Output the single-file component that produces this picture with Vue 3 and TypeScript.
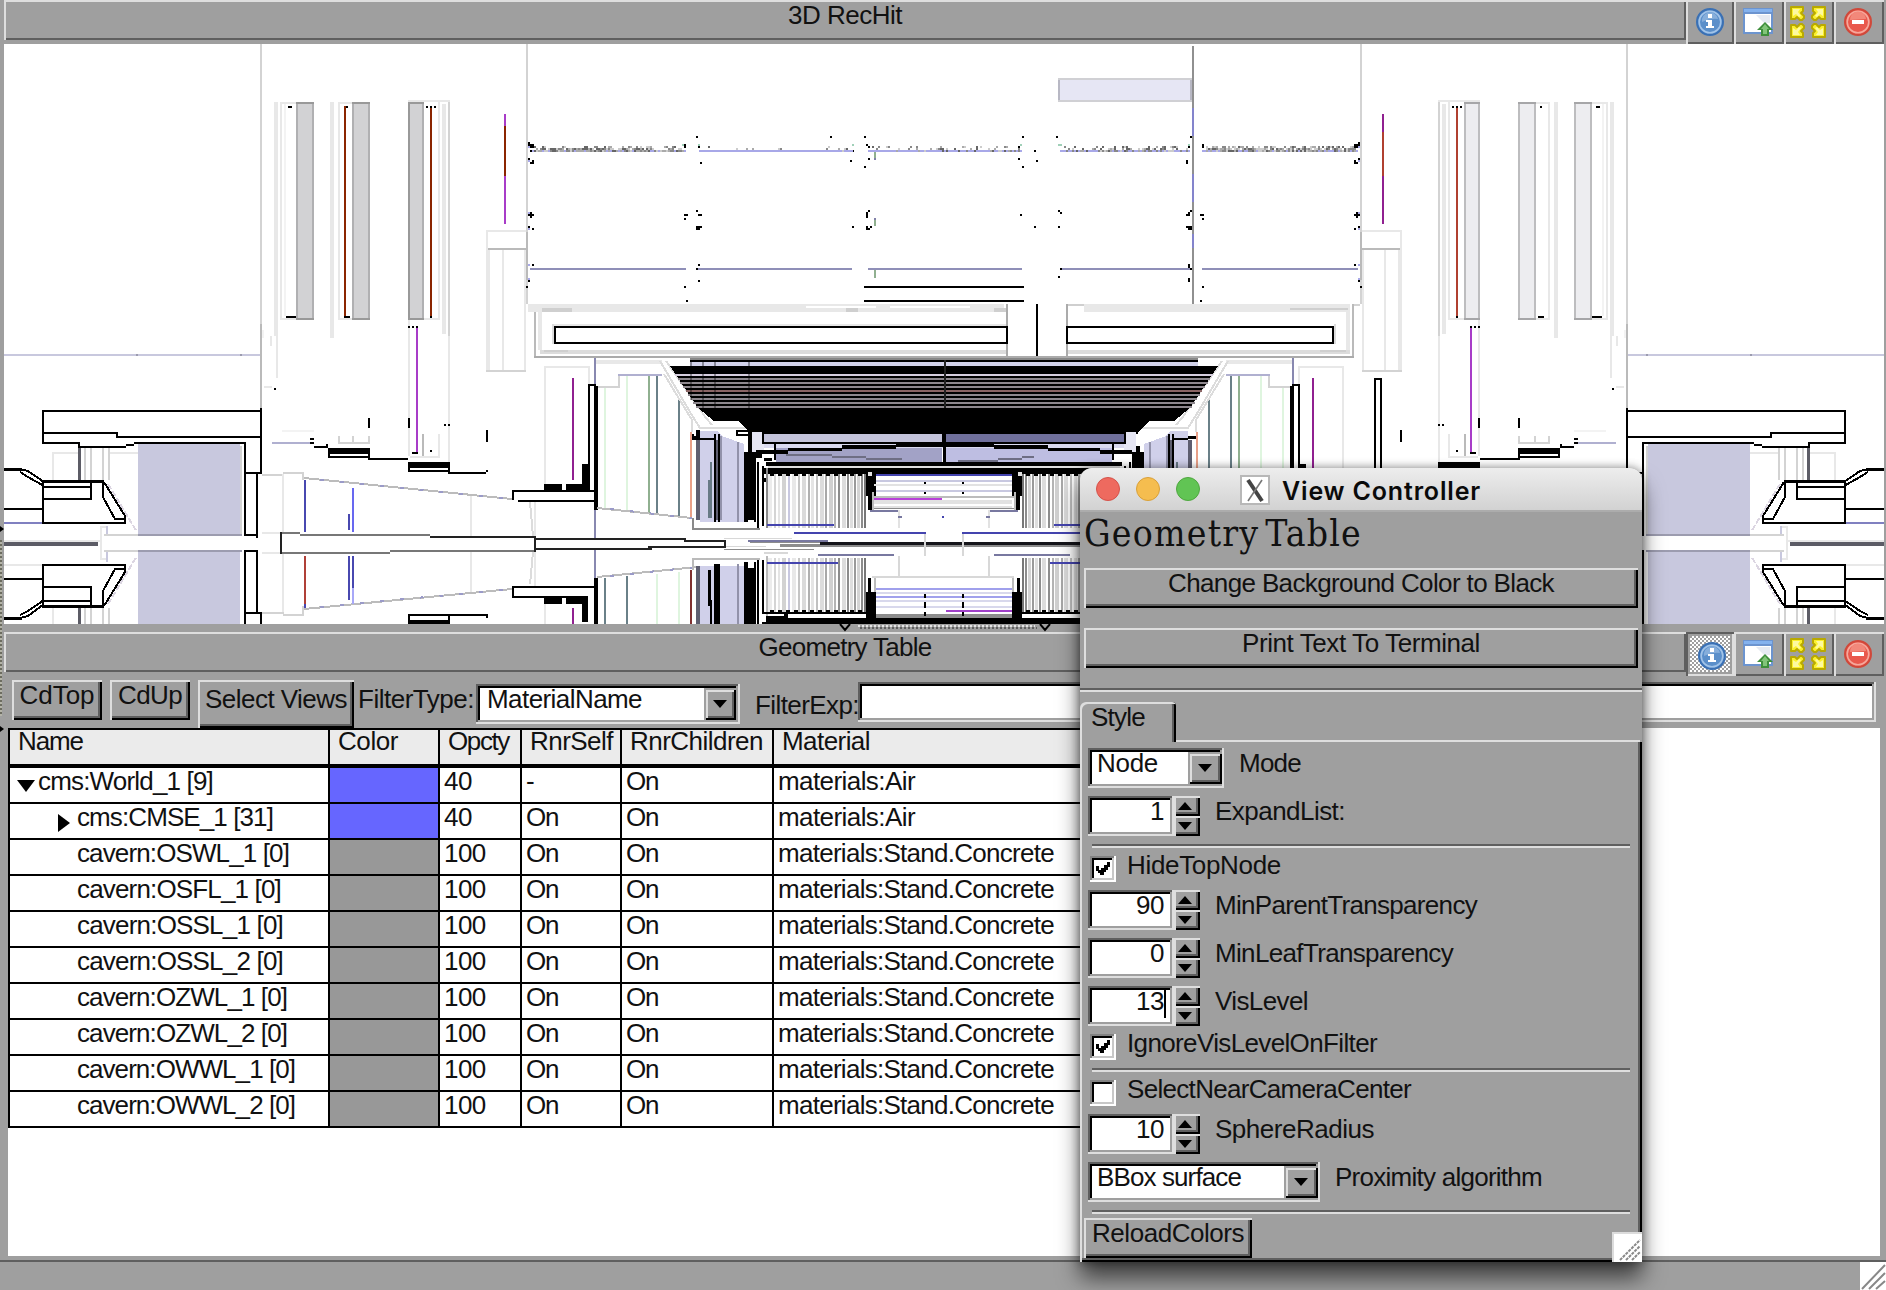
<script setup lang="ts">
type Layer = { fill: string; d: string }

/** Turns "x y w h; x y w h" into one filled path. */
function rects(list: string): string {
  return list
    .split(';')
    .map((s) => s.trim())
    .filter(Boolean)
    .map((s) => {
      const [x, y, w, h] = s.split(/\s+/).map(Number)
      return `M${x} ${y}h${w}v${h}h${-w}z`
    })
    .join('')
}
const layer = (fill: string, list: string): Layer => ({ fill, d: rects(list) })

/** Spreads a label over the advance width of the toolkit's bitmap font. */
const vFit = {
  mounted(el: HTMLElement, { value }: { value: number }) {
    const text = el.textContent ?? ''
    const gap = (value - el.getBoundingClientRect().width) / text.length
    el.style.letterSpacing = `${gap.toFixed(3)}px`
  },
}

/* one side of the detector; the other side is its reflection */
const wing: Layer[] = [
  layer('#d3d3d3', '260 44 2 280; 526 44 2 188; 526 280 2 24; 448 102 2 234; 78 452 2 28; 84 448 2 32; 90 448 2 32; 102 448 2 32; 108 448 2 32; 486 370 40 2; 84 608 2 16; 90 608 2 16; 102 608 2 16; 108 608 2 16; 240 446 2 88; 262 474 22 2; 283 472 20 2; 302 472 2 8; 262 612 22 2; 283 614 20 2; 302 606 2 10; 338 436 2 8; 352 436 2 8; 368 436 2 8; 338 442 32 2; 104 550 34 2; 104 534 34 2; 618 374 2 12; 596 386 24 2; 528 304 8 2'),
  layer('#bababa', '260 324 2 84; 526 232 2 48; 486 248 40 2; 422 434 2 22; 534 304 2 54'),
  layer('#e8e8e8', '274 102 4 234; 280 102 2 216; 280 102 16 2; 280 318 16 2; 330 102 4 236; 338 102 2 216; 338 102 14 2; 338 318 14 2; 408 100 42 2; 424 318 16 2; 438 102 2 216; 442 104 4 230; 486 230 40 2; 486 230 2 20; 486 250 4 120; 502 250 2 120; 524 250 2 120; 408 320 2 136; 448 336 2 126; 438 434 2 22; 410 456 30 2; 282 474 2 60; 282 552 2 60; 470 494 2 42; 470 552 2 42; 534 500 2 38; 534 552 2 34; 262 532 20 2; 262 552 20 2; 544 366 46 2; 544 366 2 118; 588 366 2 18; 52 452 26 2; 52 452 2 28; 110 452 28 2; 52 608 2 16; 4 540 98 2; 100 526 2 34; 100 558 6 2; 100 526 6 2; 4 564 38 2; 596 360 66 4; 544 604 2 20; 264 386 8 2; 270 336 2 10; 276 336 2 42'),
  layer('#f3f3f3', '284 104 2 212; 282 430 32 2; 262 330 2 8'),
  layer('#c8c8de', '138 444 102 90; 138 552 102 72; 4 354 256 2; 106 526 2 8; 106 552 2 10'),
  layer('#9c9caf', '138 534 104 2; 138 550 104 2; 136 354 2 2; 240 354 2 2'),
  layer('#b0b0d0', '272 442 38 2; 618 374 44 2'),
  layer('#8080c0', '4 522 38 2'),
  layer('#8888b0', '594 356 2 30; 594 510 2 28; 594 550 2 28'),
  layer('#5c5c66', '4 542 94 4; 78 448 3 32; 78 608 3 16'),
  layer('#000', '42 410 220 2; 42 410 2 34; 42 432 76 2; 116 432 2 6; 116 436 146 2; 42 442 38 2; 78 442 2 6; 78 446 48 2; 126 444 8 2; 134 442 112 2; 260 408 2 66; 244 442 2 94; 244 472 18 2; 256 474 2 64; 244 534 14 2; 244 550 14 2; 244 550 2 74; 256 550 2 62; 244 612 18 2; 260 612 2 12;' +
    '42 480 62 3; 42 486 50 2; 42 480 2 44; 90 482 2 18; 42 498 50 2; 4 508 38 2; 42 522 84 2; 124 516 2 8; 4 468 18 3;' +
    '42 605 62 3; 42 600 50 2; 42 564 2 44; 90 586 2 20; 42 586 50 2; 4 578 38 2; 42 564 84 2; 124 564 2 8; 4 617 18 3;' +
    '288 106 4 2; 286 316 10 2; 346 106 2 2; 344 316 6 2; 426 106 2 2; 430 106 2 2; 434 106 2 2; 430 316 2 2; 408 326 2 2; 412 326 2 2; 416 326 2 2; 368 418 2 10; 408 418 2 10; 486 430 2 12; 444 424 2 2; 448 424 2 2; 274 388 2 2; 310 438 4 2; 310 442 4 2; 314 446 14 2; 326 444 2 4;' +
    '328 448 42 6; 328 448 2 10; 368 448 2 12; 328 456 42 2; 370 458 38 2; 408 462 42 6; 408 462 2 10; 448 462 2 12; 408 470 42 2; 450 472 36 2; 486 470 2 2; 412 452 6 2; 430 450 2 2;' +
    '408 614 80 2; 408 614 2 10; 448 614 2 10; 408 620 42 4; 486 614 2 4;' +
    '512 490 82 2; 512 490 2 10; 518 500 78 2; 588 384 2 106; 588 384 8 2; 594 386 4 124; 544 484 18 6; 566 484 22 6; 582 464 6 26;' +
    '512 586 84 2; 512 586 2 12; 512 596 76 2; 544 598 18 6; 566 598 22 6; 582 598 6 24; 594 578 4 46'),
  layer('#000', '528 142 2 4; 530 144 4 4; 530 150 2 2; 528 158 2 2; 530 162 4 2; 532 160 2 2; 528 214 6 2; 530 212 2 6; 528 226 2 4; 532 228 2 2; 532 264 2 2; 528 280 2 2; 526 286 2 2; 684 144 2 4; 684 214 4 2; 684 218 2 2; 684 286 2 2; 686 300 2 2; 696 136 2 2; 698 146 2 2; 700 162 2 2; 696 210 2 2; 698 214 4 2; 696 226 4 4; 700 226 2 2; 698 264 2 2; 696 268 4 2; 698 280 2 2; 864 136 2 2; 866 144 2 2; 868 146 2 2; 868 158 2 2; 864 166 2 2; 850 160 2 2; 852 150 2 2; 852 226 2 2'),
  layer('#a8a8e8', '528 146 2 2; 528 160 2 2; 528 212 2 2; 528 228 2 2; 528 264 2 2; 528 278 2 2'),
  layer('#dff5df', '604 388 2 120; 626 376 2 134'),
  layer('#90b090', '648 376 2 138'),
  layer('#6a8088', '656 376 2 138; 678 398 2 120; 604 578 2 46; 626 576 2 48'),
  layer('#dff5df', '656 574 2 50; 678 572 2 52'),
  layer('#e8a088', '690 432 2 86'),
  layer('#803030', '690 570 2 54'),
]

const leftOnly: Layer[] = [
  layer('#d2d2d4', '296 102 18 218; 352 102 18 218; 408 102 16 218'),
  layer('#b0b0b2', '296 104 2 214; 312 104 2 214; 352 104 2 214; 368 104 2 214; 422 104 2 214'),
  layer('#999', '296 102 18 2; 296 318 18 2; 352 102 18 2; 352 318 18 2; 408 102 16 2; 408 318 16 2; 408 102 2 218'),
  layer('#8b2500', '344 106 2 210; 430 108 2 208; 504 126 2 50'),
  layer('#a83cc8', '504 114 2 12; 504 176 2 48; 416 328 2 124'),
  layer('#902090', '572 378 2 102; 572 608 2 16'),
  layer('#4848b0', '304 480 2 52; 348 514 2 16; 348 556 2 44; 352 556 2 32; 304 604 2 4'),
  layer('#6868f0', '352 488 2 44'),
  layer('#a8a8f8', '352 588 2 16'),
  layer('#b04038', '304 556 2 48'),
  layer('#777', '280 532 20 2; 280 552 110 2; 390 550 146 2; 300 534 130 2; 684 540 40 2'),
  layer('#222', '280 532 2 22; 430 536 106 2; 534 536 2 16; 536 538 150 2; 684 540 42 2; 724 540 2 8; 536 548 116 2; 648 546 76 2'),
  layer('#000', '866 212 2 6; 868 210 2 2; 866 226 2 4; 868 228 2 2; 870 226 2 2'),
]

const rightOnly: Layer[] = [
  layer('#ededf0', '1464 102 16 218; 1518 102 18 218; 1574 102 18 218'),
  layer('#bdbdbf', '1464 104 2 214; 1478 104 2 214; 1518 104 2 214; 1534 104 2 214; 1574 104 2 214; 1590 104 2 214'),
  layer('#a6a6a8', '1464 102 16 2; 1464 318 16 2; 1518 102 18 2; 1518 318 18 2; 1574 102 18 2; 1574 318 18 2'),
  layer('#b04030', '1456 108 2 208; 1382 132 2 44'),
  layer('#902090', '1382 114 2 18; 1382 176 2 48; 1312 378 2 102'),
  layer('#a83cc8', '1470 328 2 124'),
  layer('#000', '1374 378 8 2; 1374 378 2 100; 1380 378 2 100; 1020 214 2 2'),
]

const centre: Layer[] = [
  layer('#a8a8e8', '532 150 154 2; 699 150 154 2; 868 150 154 2; 1060 150 130 2; 1202 150 156 2'),
  layer('#8f8fb8', '530 268 156 2; 698 268 154 2; 868 268 154 2; 1062 268 128 2; 1202 268 156 2'),
  layer('#000', '864 286 160 2; 864 300 160 2; 1036 304 2 54; 830 136 2 2; 1056 136 2 2; 1058 210 2 2; 1060 212 2 2; 1058 226 2 2; 1060 268 2 2; 1058 276 2 2; 1186 160 2 4; 1188 212 2 4; 1188 226 2 4; 1190 228 2 2; 1188 264 2 4; 1188 278 2 2'),
  layer('#90b090', '874 152 2 6; 874 220 2 6; 874 270 2 8'),
  layer('#8080a8', '874 158 2 2; 874 218 2 2'),
  layer('#a0d0b8', '682 144 2 2; 698 144 2 2; 852 144 2 2; 1020 144 2 2; 1058 144 4 2; 1188 144 2 2'),
  layer('#d0d0d4', '1058 78 134 24'),
  layer('#b8b8c4', '1058 80 2 20; 1190 80 2 20'),
  layer('#e6e6f4', '1060 80 130 20'),
  layer('#909090', '1192 46 2 258'),
  layer('#8484cc', '1192 108 2 28; 1192 174 2 28; 1192 234 2 14'),
  /* solenoid frame */
  layer('#e8e8e8', '528 304 476 8; 1084 304 266 8; 538 312 4 38; 1346 312 4 38; 554 324 452 2'),
  layer('#fff', '806 306 70 2; 890 306 80 2'),
  layer('#dcdcdc', '540 350 466 4; 1068 350 282 4; 552 324 2 20; 1334 324 2 20'),
  layer('#cfcfcf', '542 308 30 4; 846 308 12 4; 1290 308 58 2; 994 308 12 4; 1066 304 18 2; 544 350 24 2; 1320 350 26 2'),
  layer('#ababab', '534 356 820 2; 1006 304 2 54; 1066 304 2 54'),
  layer('#000', '554 326 454 2; 554 342 454 2; 554 326 2 18; 1006 328 2 16; 1066 326 268 2; 1066 342 268 2; 1066 328 2 16; 1332 326 2 18'),
]

/* horizontal layers of the calorimeter wedge */
const wedgeStripes = Array.from({ length: 9 }, (_, i) => {
  const y = 374 + i * 4
  const x = Math.round(675 + (y - 374) * 0.66)
  return { x, y, w: (944 - x) * 2, fill: i === 0 ? '#d6cede' : i === 4 ? '#8a6464' : '#8e888e' }
})

const barrel: Layer[] = [
  layer('#888', '690 358 508 2'),
  layer('#000', '690 360 508 12'),
  layer('#d2d2ea', '690 362 508 4'),
  layer('#000', '750 428 388 6; 740 430 12 6'),
  layer('#e6e6f4', '752 432 12 20; 1124 432 12 20'),
  layer('#000', '762 432 364 12'),
  layer('#c4c4dc', '764 434 178 8'),
  layer('#70709c', '946 434 178 8'),
  layer('#dadaf0', '764 444 360 4'),
  layer('#a2a2c6', '776 448 166 14'),
  layer('#bebee2', '946 448 166 14'),
  layer('#000', '943 434 3 28; 842 445 54 4; 896 443 98 4; 994 445 54 4; 788 448 54 3; 1048 448 52 3; 756 450 32 4; 1100 450 32 4; 774 444 2 16; 1112 444 2 16; 766 462 356 4; 762 468 364 6'),
  layer('#6e6e84', '786 454 46 2; 832 456 34 2; 866 458 36 2; 958 460 40 2; 998 458 24 2; 1022 456 12 2'),
  layer('#dedede', '768 466 352 2'),
  layer('#000', '736 430 14 6; 748 432 4 34; 744 454 12 10; 756 454 6 4; 764 458 8 3; 764 478 4 4; 770 470 10 4'),
  layer('#fff', '738 432 10 2; 746 460 8 2; 758 462 6 2'),
  layer('#000', '692 434 2 6; 692 436 26 4; 696 430 4 8; 712 434 8 4'),
]

const endcapFill = 'M700 431H718L722 436L744 444V522H700Z'
const endcapParts: Layer[] = [
  layer('#5e5e70', '696 440 4 80; 716 440 2 80'),
  layer('#9292aa', '737 442 2 80; 720 436 2 84'),
  layer('#687a86', '708 480 4 38; 710 462 2 20'),
  layer('#000', '692 436 8 3; 700 438 14 2; 714 434 2 88; 718 434 2 88; 744 452 12 70; 748 446 4 8; 757 462 2 66; 762 466 2 60'),
  layer('#8a8a8a', '692 528 68 2; 692 518 2 10; 766 468 2 60'),
  layer('#fff', '748 520 6 6; 760 466 2 60'),
]
const endcapLow: Layer[] = [
  layer('#d0d0ea', '700 566 44 58'),
  layer('#5e5e70', '696 566 4 58'),
  layer('#9292aa', '737 564 2 60'),
  layer('#000', '708 570 3 36; 710 600 2 24; 714 564 6 60; 744 562 12 62; 762 560 2 64; 757 560 2 64; 764 612 24 12'),
  layer('#fff', '748 562 6 6; 760 560 2 60; 766 614 18 2; 768 618 20 2; 762 614 4 8'),
  layer('#bababa', '692 558 68 2; 692 558 2 12; 766 556 2 60'),
]

/* strip modules: x offset, width, tone */
const stripes: { x: number; w: number; fill: string }[] = [
  [768, 4, '#ececec'], [774, 2, '#d4d4d4'], [778, 2, '#e4e4e4'], [782, 4, '#d2d2d2'], [788, 2, '#c8c8e0'], [792, 4, '#e8e8e8'],
  [798, 2, '#c4c4c4'], [802, 4, '#dadada'], [808, 2, '#b0b0b0'], [811, 3, '#e4e4e4'], [816, 2, '#c0c0c0'], [820, 4, '#dcdcdc'],
  [825, 2, '#a8a8a8'], [829, 4, '#d0d0d0'], [834, 2, '#b4b4b4'], [838, 2, '#8c8c8c'], [842, 4, '#dcdcdc'], [847, 2, '#8c8c8c'],
  [850, 3, '#dedede'], [854, 2, '#9a9a9a'], [857, 3, '#d4d4d4'], [861, 2, '#8c8c8c'], [864, 2, '#777'],
].map(([x, w, fill]) => ({ x: x as number, w: w as number, fill: fill as string }))

const tracker: Layer[] = [
  layer('#000', '866 472 10 24; 1012 472 10 24; 868 494 4 16; 1016 494 4 16; 876 468 136 4; 924 472 2 4; 924 480 2 6; 924 490 2 4; 962 472 2 4; 962 480 2 6; 962 490 2 4'),
  layer('#e2e2e2', '868 472 4 4; 1018 472 4 4; 874 484 138 2; 874 500 138 4; 874 506 138 2; 898 510 2 18; 988 510 2 18'),
  layer('#c8c8e0', '876 480 136 2; 876 490 136 2'),
  layer('#bcbcbc', '872 496 142 2; 872 492 2 18; 1014 492 2 18'),
  layer('#4444ae', '876 474 136 2; 767 524 67 2; 1054 524 67 2; 794 532 132 2; 962 532 132 2; 767 562 71 2; 1050 562 71 2; 942 516 2 2'),
  layer('#b840d8', '874 498 68 2'),
  layer('#7878a0', '870 510 28 2; 990 510 28 2; 898 516 4 2; 986 516 4 2; 818 554 76 2; 994 554 76 2; 748 540 80 2'),
  layer('#8c8c8c', '874 508 140 1; 750 542 340 1; 780 544 320 3; 724 549 90 1'),
  layer('#15151a', '820 542 260 3'),
  layer('#d8d8d8', '724 538 68 1; 726 546 40 1; 924 534 2 22; 962 534 2 22; 898 556 2 20; 988 556 2 20; 872 576 142 2; 764 552 24 2'),
  layer('#bcbcbc', '874 578 2 38; 1012 578 2 38'),
  layer('#a0a0ec', '876 588 136 2; 876 596 136 2'),
  layer('#d8d8ec', '876 592 136 2; 876 600 136 2; 876 606 136 2'),
  layer('#a040c8', '946 610 66 2'),
  layer('#8c8c8c', '874 614 140 4'),
  layer('#000', '766 612 100 2; 766 618 360 6; 1022 612 100 2; 866 592 10 26; 1012 592 10 26; 868 578 3 14; 1017 578 3 14; 924 594 2 4; 924 602 2 6; 924 612 2 4; 962 594 2 4; 962 602 2 6; 962 612 2 4'),
]

/* hit noise just above the outer barrel line */
const noise: { x: number; y: number; fill: string }[] = []
let seed = 17
const rnd = () => (seed = (seed * 16807) % 2147483647) / 2147483647
for (const [x0, x1, p] of [[534, 684, 0.8], [702, 850, 0.09], [870, 1020, 0.28], [1064, 1188, 0.5], [1206, 1356, 0.85]]) {
  for (let x = x0; x < x1; x += 2) {
    for (const y of [146, 148, 150]) {
      const k = y === 146 ? 0.5 : 1
      if (rnd() < p * k) noise.push({ x, y, fill: ['#666', '#888', '#aaa', '#ccc'][Math.floor(rnd() * 4)] })
    }
  }
}

type Row = { name: string; w: number; depth: number; open?: boolean; color: string; op: string; self: string; mat: string }
const concrete = (name: string, w: number): Row => ({ name, w, depth: 1, color: '#989898', op: '100', self: 'On', mat: 'materials:Stand.Concrete' })
const rows: Row[] = [
  { name: 'cms:World_1 [9]', w: 175, depth: 0, open: true, color: '#6666ff', op: '40', self: '-', mat: 'materials:Air' },
  { name: 'cms:CMSE_1 [31]', w: 196, depth: 1, open: false, color: '#6666ff', op: '40', self: 'On', mat: 'materials:Air' },
  concrete('cavern:OSWL_1 [0]', 212),
  concrete('cavern:OSFL_1 [0]', 204),
  concrete('cavern:OSSL_1 [0]', 206),
  concrete('cavern:OSSL_2 [0]', 206),
  concrete('cavern:OZWL_1 [0]', 210),
  concrete('cavern:OZWL_2 [0]', 210),
  concrete('cavern:OWWL_1 [0]', 218),
  concrete('cavern:OWWL_2 [0]', 218),
]
const headers = [
  { label: 'Name', w: 65 },
  { label: 'Color', w: 60 },
  { label: 'Opcty', w: 61 },
  { label: 'RnrSelf', w: 83 },
  { label: 'RnrChildren', w: 133 },
  { label: 'Material', w: 88 },
]

type Field =
  | { kind: 'spin'; label: string; w: number; value: string; vw: number; caret?: boolean }
  | { kind: 'check'; label: string; w: number; on: boolean }
  | { kind: 'rule' }
const fields: Field[] = [
  { kind: 'spin', label: 'ExpandList:', w: 130, value: '1', vw: 14 },
  { kind: 'rule' },
  { kind: 'check', label: 'HideTopNode', w: 154, on: true },
  { kind: 'spin', label: 'MinParentTransparency', w: 262, value: '90', vw: 28 },
  { kind: 'spin', label: 'MinLeafTransparency', w: 238, value: '0', vw: 14 },
  { kind: 'spin', label: 'VisLevel', w: 93, value: '13', vw: 28, caret: true },
  { kind: 'check', label: 'IgnoreVisLevelOnFilter', w: 250, on: true },
  { kind: 'rule' },
  { kind: 'check', label: 'SelectNearCameraCenter', w: 284, on: false },
  { kind: 'spin', label: 'SphereRadius', w: 159, value: '10', vw: 28 },
]

const bars = [
  { title: '3D RecHit', w: 114, pressed: false },
  { title: 'Geometry Table', w: 173, pressed: true },
]
const tools = ['info', 'window', 'expand', 'close']
</script>

<template>
  <div class="desk">
    <template v-for="(bar, b) in bars" :key="bar.title">
      <div v-if="b === 1" class="splitter">
        <svg width="212" height="8" viewBox="0 0 212 8">
          <path d="M1 0L6 6L11 0M201 0L206 6L211 0" fill="none" stroke="#000" stroke-width="2" />
          <path d="M19 2H196" stroke="#e4e4e4" stroke-width="2" stroke-dasharray="2 2" />
          <path d="M21 4H198" stroke="#5f5f5f" stroke-width="2" stroke-dasharray="2 2" />
        </svg>
      </div>
      <header class="bar">
        <div class="bar-title"><span v-fit="bar.w">{{ bar.title }}</span></div>
        <div v-for="t in tools" :key="t" class="tool" :class="{ pressed: bar.pressed && t === 'info', first: t === 'info' }">
          <svg v-if="t === 'info'" width="28" height="28" viewBox="0 0 28 28">
            <circle cx="14" cy="14" r="13" fill="#5b8fca" stroke="#3a70b4" stroke-width="2" />
            <circle cx="14" cy="14" r="10.8" fill="none" stroke="#a3c4e8" stroke-width="1.6" />
            <path d="M6 14A8 8 0 0 1 22 11Q14 10 6 14Z" fill="#86aedb" />
            <path d="M12 6h4v4h-4zM10 12h6v6h2v2h-8v-2h2v-4h-2z" fill="#fff" />
          </svg>
          <svg v-else-if="t === 'window'" width="30" height="28" viewBox="0 0 30 28">
            <path d="M0 0H30V26H0Z" fill="#6c94cf" />
            <path d="M1 1H29V4H1Z" fill="#84b2ee" />
            <path d="M2 6H28V24H2Z" fill="#fff" />
            <path d="M13 7H27V15H21Z" fill="#e6eaf2" />
            <path d="M22 14L30 22H26V28H18V22H14Z" fill="#3f8f3c" />
            <path d="M22 16L26 21H24V26H20V21H18Z" fill="#82c47a" />
          </svg>
          <svg v-else-if="t === 'expand'" width="36" height="32" viewBox="0 0 36 32">
            <g v-for="m in ['', 'translate(36 0) scale(-1 1)', 'translate(0 32) scale(1 -1)', 'translate(36 32) scale(-1 -1)']" :key="m" :transform="m" stroke-linejoin="round">
              <path d="M1 1H13V5L11 7L14 10V12L12 14H10L7 11L5 13H1Z" fill="#fbf02c" stroke="#b9a900" stroke-width="2" />
              <path d="M3 3H10L8 6L11 10L9 11L6 8L3 10Z" fill="#fdf9a0" />
            </g>
          </svg>
          <svg v-else width="28" height="28" viewBox="0 0 28 28">
            <circle cx="14" cy="14" r="13" fill="#e9584c" stroke="#d0483a" stroke-width="2" />
            <circle cx="14" cy="14" r="10.8" fill="none" stroke="#f5a89c" stroke-width="1.6" />
            <path d="M6 12A8 8 0 0 1 22 11Z" fill="#f2887a" />
            <path d="M8 12h12v4H8z" fill="#fff" />
          </svg>
        </div>
      </header>

      <svg v-if="b === 0" class="scene" width="1880" height="580" viewBox="4 44 1880 580" shape-rendering="crispEdges">
        <g id="wing">
          <path v-for="(l, i) in wing" :key="i" :d="l.d" :fill="l.fill" />
          <g fill="none" stroke="#000" stroke-width="2">
            <path d="M20 469L28 471L44 482M20 472L28 477L44 486M103 482V497L115 519H125M104 482L125 516" />
            <path d="M20 618L28 616L44 604M20 615L28 611L44 600M103 606V591L115 569H125M104 606L125 572" />
          </g>
          <path d="M108 484L137 532M108 604L137 556" fill="none" stroke="#dcd6e2" stroke-width="2" stroke-dasharray="6 2" />
          <g fill="none" stroke="#bcbcbc" stroke-width="2">
            <path d="M304 478L512 499M304 609L512 589M597 508L692 518M597 577L697 567" />
            <path d="M320 480L512 499M320 607L512 589M610 509L692 518M610 576L697 567" stroke="#9a9ac8" stroke-dasharray="4 16" />
          </g>
          <g fill="none" stroke="#dcdcdc" stroke-width="2">
            <path d="M660 361L690 412L700 428H748M666 361L706 418L712 425M664 374L692 420V432M530 502L533 536M533 552L530 584" />
          </g>
        </g>
        <use href="#wing" transform="translate(1888 0) scale(-1 1)" />
        <path v-for="(l, i) in [...leftOnly, ...rightOnly, ...centre]" :key="i" :d="l.d" :fill="l.fill" />
        <rect v-for="(n, i) in noise" :key="'n' + i" :x="n.x" :y="n.y" width="2" height="2" :fill="n.fill" />

        <path d="M670 366H1218L1190 408L1174 421H1150L1138 432H750L738 421H714L698 408Z" fill="#000" />
        <rect v-for="s in wedgeStripes" :key="s.y" :x="s.x" :y="s.y" :width="s.w" height="2" :fill="s.fill" />
        <path v-for="(l, i) in barrel" :key="'b' + i" :d="l.d" :fill="l.fill" />
        <path d="M945 360V408" stroke="#222" stroke-width="2" />
        <path d="M691 360V400M703 360V408M715 360V408M749 360V408" stroke="#000" stroke-opacity=".35" stroke-width="2" />

        <g id="endcap">
          <path :d="endcapFill" fill="#d0d0ea" />
          <path v-for="(l, i) in [...endcapParts, ...endcapLow]" :key="i" :d="l.d" :fill="l.fill" />
          <template v-for="s in stripes" :key="s.x">
            <rect :x="s.x" y="474" :width="s.w" height="54" :fill="s.fill" />
            <rect :x="s.x" y="558" :width="s.w" height="54" :fill="s.fill" />
          </template>
          <path d="M770 475H866M770 611H866" stroke="#000" stroke-width="2" stroke-dasharray="4 4" />
        </g>
        <use href="#endcap" transform="translate(1888 0) scale(-1 1)" />
        <path v-for="(l, i) in tracker" :key="'t' + i" :d="l.d" :fill="l.fill" />
      </svg>
    </template>

    <div class="filter">
      <button class="btn short"><span v-fit="75">CdTop</span></button>
      <button class="btn short up"><span v-fit="64">CdUp</span></button>
      <button class="btn tall"><span v-fit="142">Select Views</span></button>
      <span class="lab type" v-fit="116">FilterType:</span>
      <div class="combo wide">
        <span v-fit="155">MaterialName</span>
        <i class="drop"><svg width="14" height="8"><path d="M0 0H14L7 8Z" /></svg></i>
      </div>
      <span class="lab exp" v-fit="104">FilterExp:</span>
      <div class="entry"></div>
    </div>

    <div class="table">
      <div class="tr head">
        <div v-for="h in headers" :key="h.label" class="td"><span v-fit="h.w">{{ h.label }}</span></div>
      </div>
      <div v-for="r in rows" :key="r.name" class="tr">
        <div class="td name" :class="{ child: r.depth }">
          <svg v-if="r.open" class="tri" width="18" height="12"><path d="M0 0H18L9 12Z" /></svg>
          <svg v-else-if="r.open === false" class="tri side" width="12" height="18"><path d="M0 0L12 9L0 18Z" /></svg>
          <span v-fit="r.w">{{ r.name }}</span>
        </div>
        <div class="td" :style="{ background: r.color }"></div>
        <div class="td val"><span v-fit="r.op.length * 13.9">{{ r.op }}</span></div>
        <div class="td val"><span v-fit="r.self === 'On' ? 32 : 8">{{ r.self }}</span></div>
        <div class="td val"><span v-fit="32">On</span></div>
        <div class="td val"><span v-fit="r.mat.length > 15 ? 276 : 137">{{ r.mat }}</span></div>
      </div>
    </div>
    <div class="status">
      <svg width="26" height="28" viewBox="0 0 26 28">
        <path d="M0 0H26V28H0Z" fill="#fff" />
        <path d="M2 27L25 3M9 27L25 11M16 27L25 19" stroke="#888" stroke-width="2" />
      </svg>
    </div>

    <i class="grip-dots"></i>
    <i class="mark m1"></i><i class="mark m2"></i>

    <section class="win">
      <header class="win-bar">
        <i class="light red"></i><i class="light yellow"></i><i class="light green"></i>
        <svg class="xicon" width="30" height="30" viewBox="0 0 30 30">
          <rect x="1" y="1" width="28" height="28" fill="#fff" stroke="#b8b8b8" stroke-width="2" />
          <path d="M8 5L22 26" stroke="#444" stroke-width="4" />
          <path d="M22 5L8 26" stroke="#777" stroke-width="1.6" />
        </svg>
        <b v-fit="199">View Controller</b>
      </header>
      <h1><span v-fit="278">Geometry Table</span></h1>
      <button class="btn full"><span v-fit="386">Change Background Color to Black</span></button>
      <button class="btn full second"><span v-fit="238">Print Text To Terminal</span></button>
      <div class="rule edge"></div>
      <div class="tabs"><div class="tab"><span v-fit="54">Style</span></div><div class="tab-line"></div></div>
      <div class="panel">
        <div class="line mode">
          <div class="combo node">
            <span v-fit="61">Node</span>
            <i class="drop"><svg width="14" height="8"><path d="M0 0H14L7 8Z" /></svg></i>
          </div>
          <span class="lab" v-fit="62">Mode</span>
        </div>
        <template v-for="(f, i) in fields" :key="i">
          <div v-if="f.kind === 'rule'" class="rule"></div>
          <div v-else-if="f.kind === 'check'" class="line check">
            <i class="box"><svg v-if="f.on" width="14" height="14"><path d="M0 4H3V8H5V6H8V3H11V0H14V5H12V8H10V10H8V13H4V11H2V9H0Z" /></svg></i>
            <span class="lab" v-fit="f.w">{{ f.label }}</span>
          </div>
          <div v-else class="line spin">
            <div class="num"><span v-fit="f.vw">{{ f.value }}</span><i v-if="f.caret" class="caret"></i></div>
            <div class="arrows">
              <i><svg width="14" height="8"><path d="M0 8H14L7 0Z" /></svg></i>
              <i><svg width="14" height="8"><path d="M0 0H14L7 8Z" /></svg></i>
            </div>
            <span class="lab" v-fit="f.w">{{ f.label }}</span>
          </div>
        </template>
        <div class="line prox">
          <div class="combo bbox">
            <span v-fit="144">BBox surface</span>
            <i class="drop"><svg width="14" height="8"><path d="M0 0H14L7 8Z" /></svg></i>
          </div>
          <span class="lab" v-fit="207">Proximity algorithm</span>
        </div>
        <div class="rule last"></div>
        <button class="btn reload"><span v-fit="152">ReloadColors</span></button>
      </div>
      <svg class="grip" width="30" height="30" viewBox="0 0 30 30">
        <path d="M0 0H30V30H0Z" fill="#fff" />
        <path d="M0 1H30M1 0V30" stroke="#dcdcdc" stroke-width="2" />
        <path d="M8 28L28 8M14 28L28 14M20 28L28 20" stroke="#888" stroke-width="2" stroke-dasharray="3 1" />
      </svg>
    </section>
  </div>
</template>

<style>
body { background: #9f9f9f; overflow: hidden; }
</style>

<style scoped>
* { box-sizing: border-box; }
.desk {
  position: relative; width: 1886px; height: 1290px; overflow: hidden; background: #9f9f9f;
  display: flex; flex-direction: column; color: #111;
  font: 26px/26px "Liberation Sans", Arial, sans-serif; white-space: nowrap;
}
span, b { display: inline-block; }
svg { display: block; flex: none; }
i { display: block; font-style: normal; }

.bar { display: flex; height: 44px; padding: 0 2px 0 4px; flex: none; }
.bar-title {
  width: 1682px; height: 40px; text-align: center; padding-top: 2px;
  box-shadow: inset 2px 2px #dedede, inset -2px -2px #5f5f5f;
}
.tool {
  width: 50px; height: 44px; display: flex; align-items: center; justify-content: center; padding-right: 2px;
  box-shadow: inset 2px 2px #dedede, inset -2px -2px #5f5f5f;
}
.tool.first { width: 48px; padding-right: 0; }
.tool.pressed {
  padding: 4px 0 0 4px;
  background: repeating-conic-gradient(#fff 0 25%, #9f9f9f 0 50%) 0 0 / 4px 4px;
  box-shadow: inset 2px 2px #5f5f5f, inset -2px -2px #dedede, inset 4px 4px #9f9f9f, inset -4px -4px #9f9f9f;
}
.scene { margin-left: 4px; background: #fff; }
.splitter { height: 8px; padding-left: 839px; flex: none; }

.filter { display: flex; align-items: flex-start; height: 52px; padding: 4px 0 0 12px; flex: none; }
.btn {
  border: 0; padding: 0; margin: 0; background: #9f9f9f; color: #111; font: inherit; text-align: center;
  display: flex; justify-content: center; align-items: flex-start; flex: none;
  box-shadow: inset 2px 2px #dedede, inset -2px -2px #000, inset -4px -4px #5f5f5f;
}
.short { width: 90px; height: 40px; padding-top: 2px; }
.up { width: 80px; margin-left: 8px; }
.tall { width: 156px; height: 48px; margin-left: 8px; padding-top: 6px; }
.type { margin: 6px 0 0 4px; }
.exp { margin: 12px 0 0 15px; }
.combo {
  display: flex; justify-content: space-between; height: 40px; background: #fff; padding: 2px 2px 4px 11px;
  box-shadow: inset -2px -2px #dedede, inset 2px 2px #5f5f5f, inset -4px -4px #9f9f9f, inset 4px 4px #000;
}
.combo .drop {
  width: 34px; height: 32px; margin-top: 2px; display: flex; align-items: center; justify-content: center; background: #9f9f9f;
  box-shadow: inset 2px 2px #9f9f9f, inset -2px -2px #000, inset 4px 4px #dedede, inset -4px -4px #5f5f5f;
}
.wide { width: 264px; margin: 4px 0 0 2px; padding-right: 4px; }
.wide .drop { width: 32px; }
.entry {
  width: 1018px; height: 40px; margin: 2px 0 0 -1px; background: #fff; flex: none;
  box-shadow: inset -2px -2px #dedede, inset 2px 2px #5f5f5f, inset -4px -4px #9f9f9f, inset 4px 4px #000;
}

.table { flex: none; margin: 0 6px 0 8px; height: 528px; background: #fff; }
.tr {
  display: grid; grid-template-columns: 322px 110px 82px 100px 152px 340px; height: 36px; width: 1106px;
  border-bottom: 2px solid #000;
}
.td { border-right: 2px solid #000; padding-left: 8px; }
.td:first-child { border-left: 2px solid #000; }
.head { height: 40px; border-top: 2px solid #000; border-bottom-width: 4px; background: #ebebeb; line-height: 22px; }
.name { display: flex; padding-left: 7px; }
.name span { margin-left: 3px; }
.child span { margin-left: 59px; }
.child { padding-left: 8px; }
.tri { margin: 12px 0 0 0; }
.side { margin: 10px 0 0 40px; }
.side + span { margin-left: 7px; }
.val { padding-left: 4px; }
.status { flex: none; height: 34px; padding-top: 6px; display: flex; justify-content: flex-end; background: linear-gradient(#9f9f9f 4px, #5f5f5f 4px 6px, #9f9f9f 6px); }

.grip-dots { position: absolute; left: 0; top: 540px; width: 2px; height: 176px; background: repeating-linear-gradient(#6c6c60 0 2px, #b4b4a8 2px 4px); }
.mark { position: absolute; left: 0; width: 4px; height: 6px; background: #000; clip-path: polygon(0 0, 100% 50%, 0 100%); }
.m1 { top: 526px; }
.m2 { top: 726px; }

.win {
  position: absolute; left: 1080px; top: 468px; width: 562px; height: 794px; background: #9f9f9f;
  border-radius: 12px 12px 0 0; display: flex; flex-direction: column;
  box-shadow: 0 16px 22px rgba(0, 0, 0, .6), 0 0 10px rgba(0, 0, 0, .45);
}
.win-bar {
  height: 44px; flex: none; display: flex; align-items: center; padding-left: 16px;
  border-radius: 12px 12px 0 0; background: linear-gradient(#ededed, #d2d2d2); border-bottom: 2px solid #acacac;
}
.win-bar b { font: 600 25px/30px Inter, "Liberation Sans", sans-serif; margin: 4px 0 0 12px; color: #0a0a0a; }
.light { width: 24px; height: 24px; border-radius: 50%; margin-right: 16px; border: 1.5px solid; }
.red { background: #ee6a5f; border-color: #d5524a; }
.yellow { background: #f5bd4f; border-color: #d9a038; }
.green { background: #61c454; border-color: #4fa73f; }
.xicon { margin: 2px 0 0 24px; }
h1 { margin: 0 0 0 4px; height: 56px; flex: none; font: 400 37px/43px "DejaVu Serif Condensed", "DejaVu Serif", serif; font-stretch: condensed; word-spacing: -6px; }
.full { width: 554px; height: 40px; margin-left: 4px; padding-top: 2px; }
.second { margin-top: 20px; }
.rule { height: 4px; margin: 8px 0 8px 12px; width: 538px; background: linear-gradient(#5f5f5f 50%, #dedede 50%); flex: none; }
.rule.edge { margin: 20px 0 10px; width: 562px; }
.tabs { display: flex; height: 40px; flex: none; }
.tab {
  width: 96px; border-radius: 6px 4px 0 0; padding: 2px 0 0 11px;
  box-shadow: inset 2px 2px #dedede, inset -2px 0 #000, inset -4px 0 #5f5f5f;
}
.tab-line { flex: 1; border-bottom: 2px solid #dedede; margin-right: 2px; }
.panel {
  flex: 1; position: relative; padding-top: 6px; display: flex; flex-direction: column;
  box-shadow: inset 2px 0 #dedede, inset -2px -2px #000, inset -4px -4px #5f5f5f;
}
.line { display: flex; flex: none; padding-left: 8px; align-items: flex-start; }
.mode .lab { margin: 2px 0 0 15px; }
.node { width: 136px; padding-left: 9px; }
.mode { height: 48px; }
.spin { height: 40px; margin-bottom: 8px; }
.spin + .rule, .check + .rule { margin-top: 0; }
.spin .lab { margin: 2px 0 0 15px; }
.num {
  width: 86px; height: 40px; background: #fff; padding: 2px 10px 0 0; text-align: right; position: relative;
  box-shadow: inset -2px -2px #dedede, inset 2px 2px #5f5f5f, inset -4px -4px #9f9f9f, inset 4px 4px #000;
}
.caret { position: absolute; left: 76px; top: 4px; width: 2px; height: 28px; background: #000; }
.arrows { width: 26px; }
.arrows i {
  height: 20px; display: flex; align-items: center; justify-content: center; padding-right: 4px;
  box-shadow: inset 2px 2px #dedede, inset -2px -2px #000, inset -4px -4px #5f5f5f;
}
.check { height: 26px; padding-left: 10px; margin-bottom: 8px; }
.check .lab { margin: -4px 0 0 11px; }
.box {
  width: 26px; height: 26px; background: #fff; padding: 6px 0 0 6px;
  box-shadow: inset -2px -2px #fff, inset 2px 2px #828282, inset -4px -4px #c8c8c8, inset 4px 4px #000;
}
.prox { height: 40px; }
.bbox { width: 232px; padding-left: 9px; }
.prox .lab { margin: 2px 0 0 15px; }
.rule.last { margin: 8px 0 4px 12px; }
.reload { width: 168px; height: 40px; margin-left: 4px; padding-top: 2px; }
.grip { position: absolute; right: 0; bottom: 0; }
</style>
